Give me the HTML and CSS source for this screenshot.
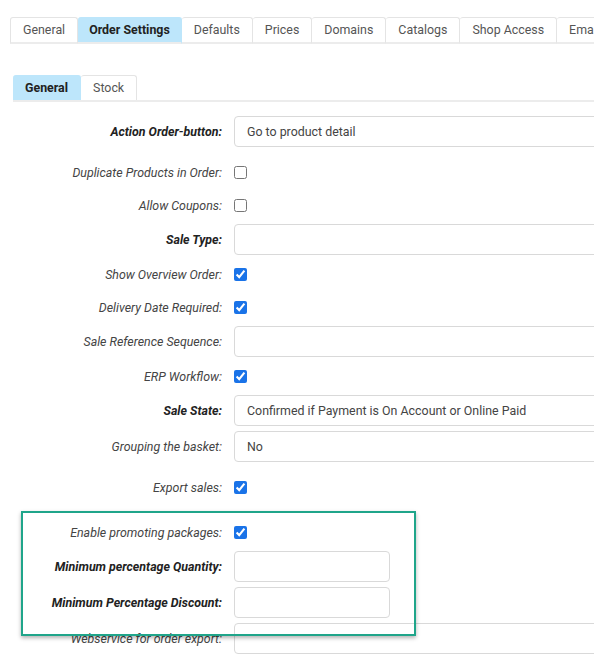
FILE: index.html
```html
<!DOCTYPE html>
<html>
<head>
<meta charset="utf-8">
<link rel="stylesheet" href="styles.css">
</head>
<body>
<div class="page">
  <div class="tabs">
    <div class="tab">General</div>
    <div class="tab active">Order Settings</div>
    <div class="tab">Defaults</div>
    <div class="tab">Prices</div>
    <div class="tab">Domains</div>
    <div class="tab">Catalogs</div>
    <div class="tab">Shop Access</div>
    <div class="tab">Emails</div>
  </div>
  <div class="subtabs">
    <div class="subtab active">General</div>
    <div class="subtab">Stock</div>
  </div>
  <div class="form">
    <div class="row input-row"><label class="lbl strong">Action Order-button:</label><div class="field">Go to product detail</div></div>
    <div class="row check-row gap-lg"><label class="lbl">Duplicate Products in Order:</label><input type="checkbox"></div>
    <div class="row check-row"><label class="lbl">Allow Coupons:</label><input type="checkbox"></div>
    <div class="row input-row"><label class="lbl strong">Sale Type:</label><div class="field"></div></div>
    <div class="row check-row"><label class="lbl">Show Overview Order:</label><input type="checkbox" checked></div>
    <div class="row check-row"><label class="lbl">Delivery Date Required:</label><input type="checkbox" checked></div>
    <div class="row input-row"><label class="lbl">Sale Reference Sequence:</label><div class="field"></div></div>
    <div class="row check-row"><label class="lbl">ERP Workflow:</label><input type="checkbox" checked></div>
    <div class="row input-row"><label class="lbl strong">Sale State:</label><div class="field">Confirmed if Payment is On Account or Online Paid</div></div>
    <div class="row input-row"><label class="lbl">Grouping the basket:</label><div class="field">No</div></div>
    <div class="row check-row gap-lg"><label class="lbl">Export sales:</label><input type="checkbox" checked></div>
    <div class="row check-row gap-xl"><label class="lbl">Enable promoting packages:</label><input type="checkbox" checked></div>
    <div class="row input-row"><label class="lbl strong">Minimum percentage Quantity:</label><div class="field short"></div></div>
    <div class="row input-row"><label class="lbl strong">Minimum Percentage Discount:</label><div class="field short"></div></div>
    <div class="row input-row"><label class="lbl">Webservice for order export:</label><div class="field"></div></div>
  </div>
  <div class="highlight"></div>
</div>
</body>
</html>
```
FILE: styles.css
```css
html, body {
  margin: 0;
  padding: 0;
  background: #fff;
  overflow: hidden;
}
body {
  font-family: Roboto, "Liberation Sans", sans-serif;
  font-size: 12.4px;
  color: #444;
}
.page {
  position: relative;
  width: 594px;
  height: 658px;
  overflow: hidden;
}
.tabs {
  display: flex;
  margin: 17px 0 0 10px;
  white-space: nowrap;
}
.tab {
  height: 24px;
  line-height: 24px;
  padding: 0 12px;
  border: 1px solid #e4e4e4;
  border-left-width: 0;
  border-bottom: 2px solid #ececec;
  border-radius: 3px 3px 0 0;
  color: #555;
  background: #fff;
}
.tab:first-child { border-left-width: 1px; }
.tab.active {
  background: #bde6fb;
  border-color: #bde6fb;
  border-bottom-color: #ececec;
  color: #222;
  font-weight: bold;
  padding: 0 11px;
}
.subtabs {
  display: flex;
  margin: 31px 0 0 13px;
  border-bottom: 2px solid #ececec;
}
.subtab {
  height: 24px;
  line-height: 24px;
  padding: 0 12px;
  border: 1px solid #e4e4e4;
  border-bottom: 0;
  border-left-width: 0;
  border-radius: 3px 3px 0 0;
  color: #555;
}
.subtab.active {
  background: #bde6fb;
  border-color: #bde6fb;
  color: #222;
  font-weight: bold;
}
.form {
  display: flex;
  flex-direction: column;
  gap: 5px;
  margin-top: 14px;
}
.row {
  display: flex;
  align-items: center;
  gap: 12px;
}
.input-row { height: 31px; }
.check-row { height: 28px; }
.gap-lg { margin-top: 6px; }
.gap-xl { margin-top: 12px; }
.lbl {
  width: 222px;
  flex: none;
  text-align: right;
  font-style: italic;
  color: #444;
  white-space: nowrap;
}
.lbl.strong {
  font-weight: bold;
  color: #222;
}
.field {
  flex: none;
  box-sizing: border-box;
  width: 400px;
  height: 31px;
  line-height: 29px;
  border: 1px solid #d9d9d9;
  border-radius: 4px;
  padding: 0 12px;
  color: #444;
  white-space: nowrap;
}
.field.short { width: 156px; }
input[type="checkbox"] {
  margin: 0;
  width: 13px;
  height: 13px;
  accent-color: #1a73e8;
}
.highlight {
  position: absolute;
  left: 21px;
  top: 511px;
  width: 391px;
  height: 121px;
  border: 2px solid #1fa58a;
  box-shadow: 0 2px 4px rgba(0, 0, 0, 0.3);
  pointer-events: none;
}
```
